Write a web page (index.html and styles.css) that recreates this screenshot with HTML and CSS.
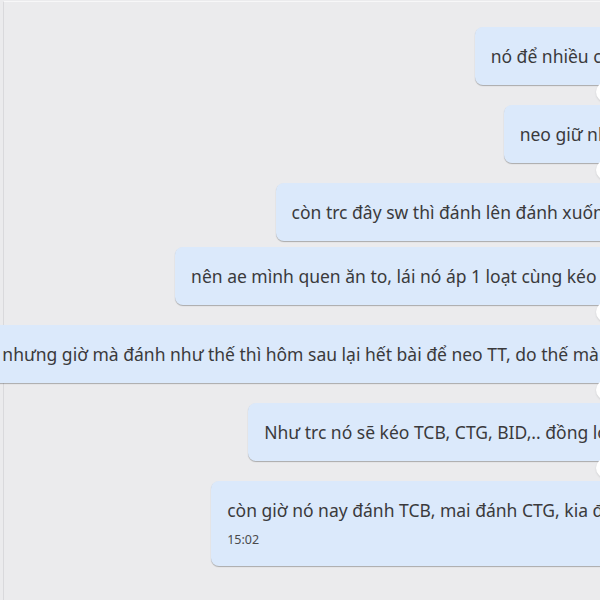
FILE: index.html
```html
<!DOCTYPE html>
<html lang="vi">
<head>
    <meta charset="UTF-8">
    <meta name="viewport" content="width=device-width, initial-scale=1.0">
    <title>Tin nhắn</title>
    <link rel="stylesheet" href="styles.css">
</head>
<body>
    <div class="chat">
        <div class="msg has-react">
            <div class="msg-text">nó để nhiều cổ r</div>
            <span class="react"></span>
        </div>
        <div class="msg has-react">
            <div class="msg-text">neo giữ nhịp</div>
            <span class="react"></span>
        </div>
        <div class="msg">
            <div class="msg-text">còn trc đây sw thì đánh lên đánh xuống..</div>
        </div>
        <div class="msg has-react">
            <div class="msg-text">nên ae mình quen ăn to, lái nó áp 1 loạt cùng kéo cả,</div>
            <span class="react"></span>
        </div>
        <div class="msg has-react">
            <div class="msg-text">nhưng giờ mà đánh như thế thì hôm sau lại hết bài để neo TT, do thế mà bâ</div>
            <span class="react"></span>
        </div>
        <div class="msg has-react">
            <div class="msg-text">Như trc nó sẽ kéo TCB, CTG, BID,.. đồng loạt</div>
            <span class="react"></span>
        </div>
        <div class="msg">
            <div class="msg-text">còn giờ nó nay đánh TCB, mai đánh CTG, kia đán</div>
            <div class="msg-time">15:02</div>
        </div>
    </div>
</body>
</html>
```

FILE: styles.css
```css
html, body {
    margin: 0;
    padding: 0;
    height: 100%;
    overflow: hidden;
}

body {
    font-family: 'Noto Sans', 'Open Sans', sans-serif;
    font-size: 17.5px;
    color: #3a3a3c;
    background: #ebebed;
    padding-left: 3px;
    box-sizing: border-box;
}

.chat {
    display: flex;
    flex-direction: column;
    align-items: flex-end;
    width: 637px;
    height: 100%;
    padding-top: 25px;
    border-left: 1px solid #d9d9dc;
    border-top: 1px solid #f7f7f8;
    box-sizing: border-box;
    margin-top: 1px;
}

.msg {
    position: relative;
    background: #dbe9fb;
    border-radius: 8px;
    box-shadow: 0 1px 1px rgba(0, 0, 0, 0.28);
    padding: 18px 16px;
    margin-bottom: 6px;
    white-space: nowrap;
}

.msg.has-react {
    margin-bottom: 20px;
}

.msg-text {
    line-height: 22px;
}

.msg-time {
    font-size: 12.5px;
    line-height: 16px;
    margin-top: 11px;
    color: #4a4a4c;
}

.react {
    position: absolute;
    right: 24px;
    bottom: -17px;
    width: 20px;
    height: 20px;
    border-radius: 50%;
    background: #fff;
    box-shadow: 0 1px 2px rgba(0, 0, 0, 0.12);
}
```
